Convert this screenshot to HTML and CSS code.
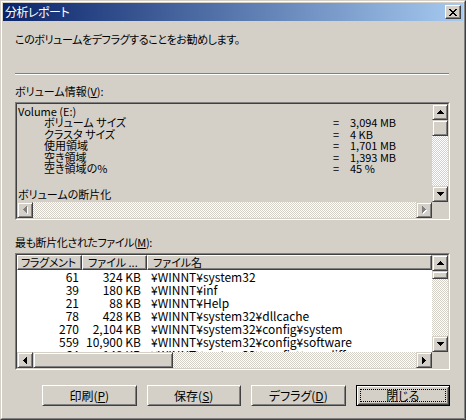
FILE: index.html
```html
<!DOCTYPE html>
<html lang="ja">
<head>
<meta charset="utf-8">
<title>分析レポート</title>
<link rel="stylesheet" href="styles.css">
</head>
<body>
<div class="window">
  <div class="frame">
    <div class="titlebar">
      <span class="title">分析レポート</span>
      <span class="capbtn"><svg width="8" height="7" viewBox="0 0 8 7"><path d="M0 0h2v1H0zM6 0h2v1H6zM1 1h2v1H1zM5 1h2v1H5zM2 2h4v1H2zM3 3h2v1H3zM2 4h4v1H2zM1 5h2v1H1zM5 5h2v1H5zM0 6h2v1H0zM6 6h2v1H6z" fill="#000"/></svg></span>
    </div>
    <div class="content">
      <div class="message jp tight">このボリュームをデフラグすることをお勧めします。</div>
      <div class="separator"></div>
      <div class="label jp">ボリューム情報(<u>V</u>):</div>
      <div class="well vol">
        <div class="well-in grid2">
          <div class="vol-text">
            <div class="vrow"><span class="span-all">Volume (E:)</span></div>
            <div class="vrow"><span></span><span>ボリューム サイズ</span><span>=</span><span>3,094 MB</span></div>
            <div class="vrow"><span></span><span>クラスタ サイズ</span><span>=</span><span>4 KB</span></div>
            <div class="vrow"><span></span><span>使用領域</span><span>=</span><span>1,701 MB</span></div>
            <div class="vrow"><span></span><span>空き領域</span><span>=</span><span>1,393 MB</span></div>
            <div class="vrow"><span></span><span>空き領域の%</span><span>=</span><span>45 %</span></div>
            <div class="vrow frag"><span class="span-all">ボリュームの断片化</span></div>
          </div>
          <div class="vscroll">
            <div class="sbtn"><svg width="7" height="4" viewBox="0 0 7 4"><path d="M3 0h1v1H3zM2 1h3v1H2zM1 2h5v1H1zM0 3h7v1H0z"/></svg></div>
            <div class="sbtn thumb-v16"></div>
            <div class="track"></div>
            <div class="sbtn"><svg width="7" height="4" viewBox="0 0 7 4"><path d="M0 0h7v1H0zM1 1h5v1H1zM2 2h3v1H2zM3 3h1v1H3z"/></svg></div>
          </div>
          <div class="hscroll">
            <div class="sbtn"><svg width="5" height="8" viewBox="0 0 5 8"><path class="hl" d="M4 1h1v7H4zM3 2h1v5H3zM2 3h1v3H2zM1 4h1v1H1z"/><path class="dis" d="M3 0h1v7H3zM2 1h1v5H2zM1 2h1v3H1zM0 3h1v1H0z"/></svg></div>
            <div class="track"></div>
            <div class="sbtn"><svg width="5" height="8" viewBox="0 0 5 8"><path class="hl" d="M1 1h1v7H1zM2 2h1v5H2zM3 3h1v3H3zM4 4h1v1H4z"/><path class="dis" d="M0 0h1v7H0zM1 1h1v5H1zM2 2h1v3H2zM3 3h1v1H3z"/></svg></div>
          </div>
          <div class="corner"></div>
        </div>
      </div>
      <div class="label label2 jp tight">最も断片化されたファイル(<u>M</u>):</div>
      <div class="well list">
        <div class="well-in grid2 white">
          <div class="lv">
            <div class="lv-head">
              <div class="hcell first jp">フラグメント</div>
              <div class="hcell jp">ファイル ...</div>
              <div class="hcell jp">ファイル名</div>
            </div>
            <div class="lv-body">
              <div class="lrow"><span class="n">61</span><span class="s">324 KB</span><span class="f">¥WINNT¥system32</span></div>
              <div class="lrow"><span class="n">39</span><span class="s">180 KB</span><span class="f">¥WINNT¥inf</span></div>
              <div class="lrow"><span class="n">21</span><span class="s">88 KB</span><span class="f">¥WINNT¥Help</span></div>
              <div class="lrow"><span class="n">78</span><span class="s">428 KB</span><span class="f">¥WINNT¥system32¥dllcache</span></div>
              <div class="lrow"><span class="n">270</span><span class="s">2,104 KB</span><span class="f">¥WINNT¥system32¥config¥system</span></div>
              <div class="lrow"><span class="n">559</span><span class="s">10,900 KB</span><span class="f">¥WINNT¥system32¥config¥software</span></div>
              <div class="lrow"><span class="n">64</span><span class="s">148 KB</span><span class="f">¥WINNT¥system32¥config¥userdiff</span></div>
            </div>
          </div>
          <div class="vscroll">
            <div class="sbtn"><svg width="7" height="4" viewBox="0 0 7 4"><path d="M3 0h1v1H3zM2 1h3v1H2zM1 2h5v1H1zM0 3h7v1H0z"/></svg></div>
            <div class="sbtn thumb-v8"></div>
            <div class="track"></div>
            <div class="sbtn"><svg width="7" height="4" viewBox="0 0 7 4"><path d="M0 0h7v1H0zM1 1h5v1H1zM2 2h3v1H2zM3 3h1v1H3z"/></svg></div>
          </div>
          <div class="hscroll">
            <div class="sbtn"><svg width="4" height="7" viewBox="0 0 4 7"><path d="M3 0h1v7H3zM2 1h1v5H2zM1 2h1v3H1zM0 3h1v1H0z"/></svg></div>
            <div class="sbtn thumb-h"></div>
            <div class="track"></div>
            <div class="sbtn"><svg width="4" height="7" viewBox="0 0 4 7"><path d="M0 0h1v7H0zM1 1h1v5H1zM2 2h1v3H2zM3 3h1v1H3z"/></svg></div>
          </div>
          <div class="corner"></div>
        </div>
      </div>
      <div class="buttons">
        <div class="btn">印刷(<u>P</u>)</div>
        <div class="btn">保存(<u>S</u>)</div>
        <div class="btn">デフラグ(<u>D</u>)</div>
        <div class="btn default">閉じる</div>
      </div>
    </div>
  </div>
</div>
</body>
</html>
```

FILE: styles.css
```css
* { box-sizing: border-box; }
html, body { margin: 0; padding: 0; }
body {
  width: 466px;
  height: 420px;
  overflow: hidden;
  background: #d4d0c8;
  color: #000;
  font-family: "Noto Sans CJK JP", "Noto Sans", sans-serif;
  font-size: 12px;
  font-feature-settings: "palt";
}
u { text-decoration: underline; text-underline-offset: 1px; }
.jp { font-size: 11px; }
.tight { letter-spacing: -0.4px; }

.window {
  width: 466px;
  height: 420px;
  border: 1px solid;
  border-color: #d4d0c8 #404040 #404040 #d4d0c8;
}
.frame {
  height: 100%;
  border: 1px solid;
  border-color: #fff #808080 #808080 #fff;
  padding: 1px;
  display: flex;
  flex-direction: column;
}
.titlebar {
  height: 18px;
  flex: none;
  background: linear-gradient(to right, #0a246a, #a6caf0);
  display: flex;
  align-items: center;
  justify-content: space-between;
  padding: 0 2px 0 2px;
}
.title { color: #fff; line-height: 18px; letter-spacing: -0.5px; }
.capbtn {
  width: 16px;
  height: 14px;
  display: flex;
  align-items: center;
  justify-content: center;
  border: 1px solid;
  border-color: #fff #404040 #404040 #fff;
  box-shadow: inset -1px -1px #808080;
  background: #d4d0c8;
}

.content {
  padding: 0 13px 0 12px;
  display: flex;
  flex-direction: column;
}
.message { margin-top: 11px; line-height: 14px; }
.separator {
  margin-top: 27px;
  margin-right: 1px;
  height: 2px;
  border-top: 1px solid #808080;
  border-bottom: 1px solid #fff;
}
.label { margin-top: 9px; line-height: 14px; }
.label2 { margin-top: 15px; }

.well {
  margin-top: 4px;
  border: 1px solid;
  border-color: #808080 #fff #fff #808080;
}
.well-in {
  height: 100%;
  border: 1px solid;
  border-color: #404040 #d4d0c8 #d4d0c8 #404040;
  background: #d4d0c8;
}
.white { background: #fff; }
.vol { height: 118px; }
.list { height: 117px; }

.grid2 {
  display: grid;
  grid-template-columns: 1fr 16px;
  grid-template-rows: 1fr 16px;
}

.vol-text {
  padding: 1.5px 0 0 1px;
  overflow: hidden;
  font-size: 11px;
}
.vrow {
  display: grid;
  grid-template-columns: 26px 289px 17px auto;
  line-height: 11.5px;
  height: 11.5px;
  white-space: nowrap;
}
.span-all { grid-column: 1 / -1; }
.frag { margin-top: 14px; }

.vscroll { display: flex; flex-direction: column; }
.hscroll { display: flex; flex-direction: row; }
.sbtn {
  width: 16px;
  height: 16px;
  flex: none;
  display: flex;
  align-items: center;
  justify-content: center;
  background: #d4d0c8;
  border: 1px solid;
  border-color: #d4d0c8 #404040 #404040 #d4d0c8;
  box-shadow: inset 1px 1px #fff, inset -1px -1px #808080;
}
.sbtn svg { fill: #000; display: block; }
.sbtn .hl { fill: #fff; }
.sbtn .dis { fill: #808080; }
.thumb-v16 { height: 16px; }
.thumb-v8 { height: 8px; }
.thumb-h { width: 140px; }
.track {
  flex: 1;
  background-color: #fff;
  background-image: repeating-conic-gradient(#d4d0c8 0 25%, #fff 0 50%);
  background-size: 2px 2px;
}
.corner { background: #d4d0c8; }

.lv { display: flex; flex-direction: column; overflow: hidden; }
.lv-head {
  display: grid;
  grid-template-columns: 65px 65px 1fr;
  height: 15px;
  flex: none;
}
.hcell {
  background: #d4d0c8;
  border: 1px solid;
  border-color: #fff #404040 #404040 #fff;
  box-shadow: inset -1px -1px #808080;
  line-height: 12px;
  padding-left: 5px;
  white-space: nowrap;
  overflow: hidden;
}
.hcell.first { padding-left: 3px; letter-spacing: -0.3px; }
.lv-body { flex: 1; overflow: hidden; }
.lrow {
  display: grid;
  grid-template-columns: 65px 65px 1fr;
  height: 13px;
  line-height: 13px;
  white-space: nowrap;
}
.lrow .n { text-align: right; padding-right: 3px; }
.lrow .s { text-align: right; padding-right: 6px; }
.lrow .f { padding-left: 4px; }

.buttons {
  margin-top: 15px;
  padding-left: 27px;
  display: flex;
  gap: 10px;
}
.btn {
  width: 95px;
  height: 21px;
  display: flex;
  align-items: center;
  justify-content: center;
  background: #d4d0c8;
  border: 1px solid;
  border-color: #fff #404040 #404040 #fff;
  box-shadow: inset 1px 1px #d4d0c8, inset -1px -1px #808080;
  line-height: 14px;
}
.btn.default {
  border-color: #000;
  box-shadow: inset 1px 1px #fff, inset -1px -1px #404040, inset 2px 2px #d4d0c8, inset -2px -2px #808080;
  outline: 1px dotted #000;
  outline-offset: -5px;
}
```
